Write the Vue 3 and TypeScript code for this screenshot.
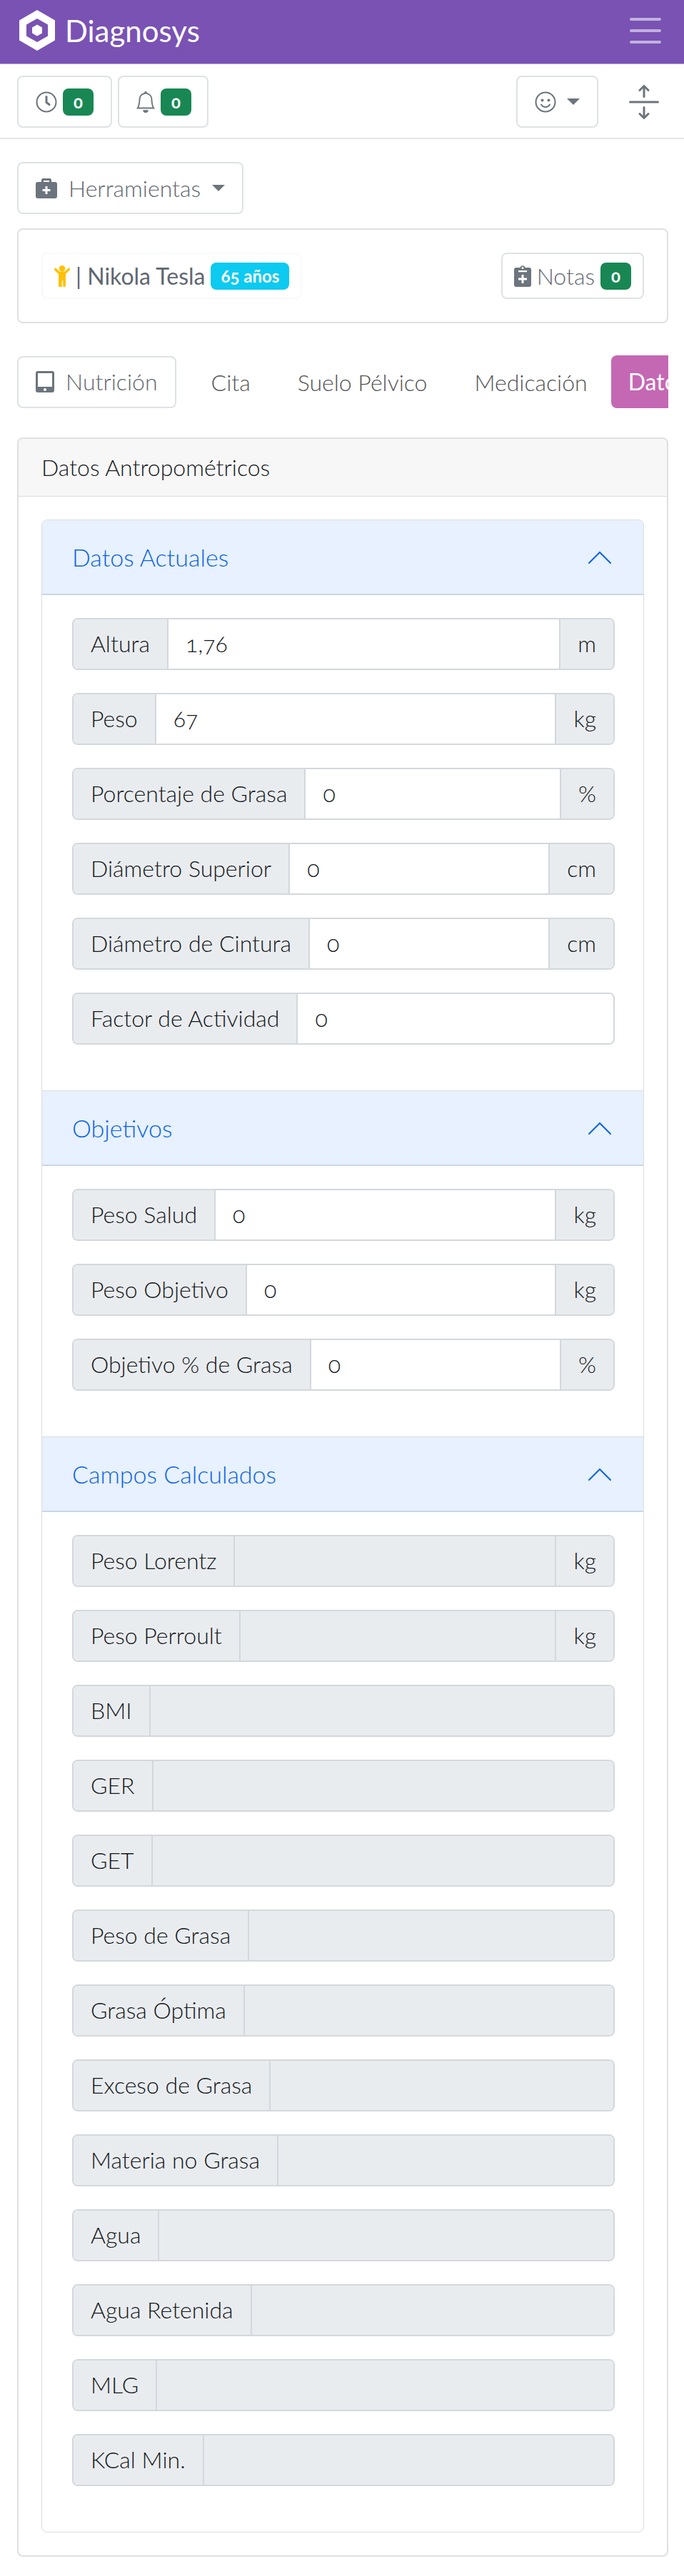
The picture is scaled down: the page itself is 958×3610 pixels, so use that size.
<script setup lang="ts">
import { reactive, ref } from 'vue'

interface Field {
  id: string
  label: string
  value: string
  unit?: string
  readonly?: boolean
}

interface Section {
  id: string
  title: string
  open: boolean
  fields: Field[]
}

const calculated = (id: string, label: string, unit?: string): Field => ({
  id,
  label,
  value: '',
  unit,
  readonly: true,
})

const sections = reactive<Section[]>([
  {
    id: 'actuales',
    title: 'Datos Actuales',
    open: true,
    fields: [
      { id: 'altura', label: 'Altura', value: '1,76', unit: 'm' },
      { id: 'peso', label: 'Peso', value: '67', unit: 'kg' },
      { id: 'grasa', label: 'Porcentaje de Grasa', value: '0', unit: '%' },
      { id: 'superior', label: 'Diámetro Superior', value: '0', unit: 'cm' },
      { id: 'cintura', label: 'Diámetro de Cintura', value: '0', unit: 'cm' },
      { id: 'actividad', label: 'Factor de Actividad', value: '0' },
    ],
  },
  {
    id: 'objetivos',
    title: 'Objetivos',
    open: true,
    fields: [
      { id: 'salud', label: 'Peso Salud', value: '0', unit: 'kg' },
      { id: 'objetivo', label: 'Peso Objetivo', value: '0', unit: 'kg' },
      { id: 'objetivo-grasa', label: 'Objetivo % de Grasa', value: '0', unit: '%' },
    ],
  },
  {
    id: 'calculados',
    title: 'Campos Calculados',
    open: true,
    fields: [
      calculated('lorentz', 'Peso Lorentz', 'kg'),
      calculated('perroult', 'Peso Perroult', 'kg'),
      calculated('bmi', 'BMI'),
      calculated('ger', 'GER'),
      calculated('get', 'GET'),
      calculated('peso-grasa', 'Peso de Grasa'),
      calculated('optima', 'Grasa Óptima'),
      calculated('exceso', 'Exceso de Grasa'),
      calculated('materia', 'Materia no Grasa'),
      calculated('agua', 'Agua'),
      calculated('retenida', 'Agua Retenida'),
      calculated('mlg', 'MLG'),
      calculated('kcal', 'KCal Min.'),
    ],
  },
])

const tabs = ['Cita', 'Suelo Pélvico', 'Medicación', 'Datos Antropométricos']
const activeTab = ref('Datos Antropométricos')
</script>

<template>
  <div class="page">
    <header class="topbar">
      <a class="brand" href="#">
        <svg class="brand-mark" viewBox="0 0 50 57" aria-hidden="true">
          <path
            fill-rule="evenodd"
            d="M25 0 50 14.5V42.5L25 57 0 42.5V14.5ZM25 12 10 20.5V36.5L25 45 40 36.5V20.5Z"
          />
          <path d="M25 20.5 32 24.5V32.5L25 36.5 18 32.5V24.5Z" />
        </svg>
        <span>Diagnosys</span>
      </a>
      <button class="menu" type="button" aria-label="Menú">
        <svg viewBox="0 0 44 38" aria-hidden="true">
          <path d="M2 3h40M2 19h40M2 35h40" />
        </svg>
      </button>
    </header>

    <div class="toolbar">
      <button class="btn" type="button" aria-label="Pendientes">
        <svg class="icon line" viewBox="0 0 30 30" aria-hidden="true">
          <circle cx="15" cy="15" r="13.5" />
          <path class="hand" d="M15 7.5V15.5L19 18.5" />
        </svg>
        <span class="badge green">0</span>
      </button>
      <button class="btn bell" type="button" aria-label="Avisos">
        <svg class="icon" viewBox="0 0 16 16" aria-hidden="true">
          <path
            d="M8 16a2 2 0 0 0 2-2H6a2 2 0 0 0 2 2zM8 1.918l-.797.161A4.002 4.002 0 0 0 4 6c0 .628-.134 2.197-.459 3.742-.16.767-.376 1.566-.663 2.258h10.244c-.287-.692-.502-1.49-.663-2.258C12.134 8.197 12 6.628 12 6a4.002 4.002 0 0 0-3.203-3.92L8 1.917zM14.22 12c.223.447.481.801.78 1H1c.299-.199.557-.553.78-1C2.68 10.2 3 6.88 3 6c0-2.42 1.72-4.44 4.005-4.901a1 1 0 1 1 1.99 0A5.002 5.002 0 0 1 13 6c0 .88.32 4.2 1.22 6z"
          />
        </svg>
        <span class="badge green">0</span>
      </button>
      <button class="btn mood" type="button" aria-label="Estado">
        <svg class="icon line" viewBox="0 0 30 30" aria-hidden="true">
          <circle cx="15" cy="15" r="13.5" />
          <path d="M9 18.5Q11 22 15 22T21 18.5" />
          <circle class="dot" cx="10.5" cy="12.5" r="2" />
          <circle class="dot" cx="19.5" cy="12.5" r="2" />
        </svg>
        <span class="caret"></span>
      </button>
      <button class="expand" type="button" aria-label="Expandir">
        <svg viewBox="0 0 16 16" aria-hidden="true">
          <path
            d="M1 8a.5.5 0 0 1 .5-.5h13a.5.5 0 0 1 0 1h-13A.5.5 0 0 1 1 8zM7.646.146a.5.5 0 0 1 .708 0l2 2a.5.5 0 0 1-.708.708L8.5 1.707V5.5a.5.5 0 0 1-1 0V1.707L6.354 2.854a.5.5 0 1 1-.708-.708l2-2zM8 10a.5.5 0 0 1 .5.5v3.793l1.146-1.147a.5.5 0 0 1 .708.708l-2 2a.5.5 0 0 1-.708 0l-2-2a.5.5 0 0 1 .708-.708L7.5 14.293V10.5A.5.5 0 0 1 8 10z"
          />
        </svg>
      </button>
    </div>

    <main class="content">
      <button class="btn tools" type="button">
        <svg class="icon" viewBox="0 0 30 30" aria-hidden="true">
          <path
            fill-rule="evenodd"
            d="M8 6V3.500Q8 1 10.500 1H19.500Q22 1 22 3.500V6H27Q30 6 30 9V26Q30 29 27 29H3Q0 29 0 26V9Q0 6 3 6ZM11 6H19V4H11ZM13.500 12V16H9.500V19H13.500V23H16.500V19H20.500V16H16.500V12Z"
          />
        </svg>
        <span>Herramientas</span>
        <span class="caret"></span>
      </button>

      <section class="patient">
        <button class="btn small ghost" type="button">
          <svg class="icon person" viewBox="0 0 22 30" aria-hidden="true">
            <circle cx="11" cy="4.200" r="4.200" />
            <path
              d="M3 4.200 7.500 8.500H14.500L19 4.200A1.800 1.800 0 0 1 21.500 6.800L16 12V28.500A1.900 1.900 0 0 1 12.200 28.500V21H10.800V28.500A1.900 1.900 0 0 1 6 28.500V12L.5 6.800A1.800 1.800 0 0 1 3 4.200Z"
            />
          </svg>
          <strong>| Nikola Tesla</strong>
          <span class="badge cyan">65 años</span>
        </button>
        <button class="btn small" type="button">
          <svg class="icon clip" viewBox="0 0 24 30" aria-hidden="true">
            <path
              fill-rule="evenodd"
              d="M3 3H8.500A3.600 3.600 0 0 1 15.500 3H21Q24 3 24 6V27Q24 30 21 30H3Q0 30 0 27V6Q0 3 3 3ZM12 2A1.500 1.500 0 1 0 12 5A1.500 1.500 0 1 0 12 2ZM6 7V9.200H18V7ZM10.500 13V17.500H6V20.500H10.500V25H13.500V20.500H18V17.500H13.500V13Z"
            />
          </svg>
          <span>Notas</span>
          <span class="badge green">0</span>
        </button>
      </section>

      <nav class="tabs" aria-label="Secciones">
        <button class="btn kind" type="button">
          <svg class="icon tablet" viewBox="0 0 26 30" aria-hidden="true">
            <path
              fill-rule="evenodd"
              d="M3 0H23Q26 0 26 3V27Q26 30 23 30H3Q0 30 0 27V3Q0 0 3 0ZM3 3V22H23V3ZM13 24A2 2 0 1 0 13 28A2 2 0 1 0 13 24Z"
            />
          </svg>
          <span>Nutrición</span>
        </button>
        <a
          v-for="tab in tabs"
          :key="tab"
          href="#"
          class="tab"
          :class="{ active: tab === activeTab }"
          @click.prevent="activeTab = tab"
          >{{ tab }}</a
        >
      </nav>

      <section class="card">
        <h1 class="card-title">Datos Antropométricos</h1>
        <div class="card-body">
          <div class="accordion">
            <section v-for="section in sections" :key="section.id" class="section">
              <h2 class="section-head">
                <button
                  type="button"
                  class="section-toggle"
                  :aria-expanded="section.open"
                  @click="section.open = !section.open"
                >
                  <span>{{ section.title }}</span>
                  <svg
                    class="chevron"
                    :class="{ closed: !section.open }"
                    viewBox="0 0 34 34"
                    aria-hidden="true"
                  >
                    <path d="M2 25 17 10 32 25" />
                  </svg>
                </button>
              </h2>
              <div v-show="section.open" class="fields">
                <div v-for="field in section.fields" :key="field.id" class="field">
                  <label :for="field.id">{{ field.label }}</label>
                  <input
                    :id="field.id"
                    v-model="field.value"
                    type="text"
                    :readonly="field.readonly"
                  />
                  <span v-if="field.unit" class="unit">{{ field.unit }}</span>
                </div>
              </div>
            </section>
          </div>
        </div>
      </section>
    </main>
  </div>
</template>

<style>
body {
  margin: 0;
  background: #fff;
}
</style>

<style scoped>
.page,
.page * {
  box-sizing: border-box;
}

.page {
  font-family: Lato, "Open Sans", sans-serif;
  font-size: 32px;
  font-weight: 300;
  line-height: 48px;
  font-variant-numeric: oldstyle-nums;
  color: #14181b;
  padding-bottom: 26px;
}

button,
input {
  font: inherit;
  font-variant-numeric: inherit;
  color: inherit;
  margin: 0;
}

button {
  cursor: pointer;
}

.topbar {
  display: flex;
  align-items: center;
  justify-content: space-between;
  height: 90px;
  padding: 0 32px 4px 27px;
  background: #7952b3;
  border-bottom: 1px solid #b9a3d6;
}

.brand {
  display: flex;
  align-items: center;
  gap: 14px;
  color: #fff;
  font-size: 42px;
  font-weight: 400;
  line-height: 56px;
  text-decoration: none;
}

.brand-mark {
  width: 50px;
  height: 57px;
  fill: #fff;
}

.menu {
  display: flex;
  padding: 0;
  border: 0;
  background: none;
}

.menu svg {
  width: 44px;
  height: 38px;
  fill: none;
  stroke: rgba(255, 255, 255, 0.55);
  stroke-width: 4;
  stroke-linecap: round;
}

.toolbar {
  display: flex;
  align-items: center;
  gap: 8px;
  padding: 16px 32px 14px 24px;
  border-bottom: 2px solid #e6e6e6;
}

.btn {
  display: inline-flex;
  flex: none;
  align-items: center;
  gap: 8px;
  height: 73px;
  padding: 0 24px;
  border: 2px solid #dee2e6;
  border-radius: 8px;
  background: #fff;
  color: #5f6870;
  white-space: nowrap;
}

.bell {
  gap: 6px;
  padding: 0 22px;
}

.icon {
  width: 30px;
  height: 30px;
  flex: none;
  fill: #6c757d;
}

.line {
  fill: none;
  stroke: #6c757d;
  stroke-width: 2;
  stroke-linecap: round;
}

.hand {
  stroke-width: 3;
}

.dot {
  fill: #6c757d;
  stroke: none;
}

.badge {
  display: inline-flex;
  align-items: center;
  justify-content: center;
  height: 38px;
  min-width: 43px;
  padding: 0 14px;
  border-radius: 8px;
  color: #fff;
  font-size: 24px;
  font-weight: 700;
  line-height: 30px;
}

.green {
  background: #198754;
}

.cyan {
  background: #0dcaf0;
}

.caret {
  border: 9px solid transparent;
  border-top-color: #6c757d;
  border-bottom: 0;
}

.mood {
  gap: 15px;
  margin-left: auto;
  margin-right: 32px;
}

.expand {
  display: flex;
  padding: 0;
  border: 0;
  background: none;
}

.expand svg {
  width: 48px;
  height: 48px;
  fill: #6c757d;
}

.content {
  display: flex;
  flex-direction: column;
  align-items: stretch;
  padding: 32px 22px 0 24px;
}

.tools {
  align-self: flex-start;
  gap: 16px;
}

.patient {
  display: flex;
  align-items: center;
  justify-content: space-between;
  height: 133px;
  margin-top: 20px;
  padding: 0 32px;
  border: 2px solid #e0e0e0;
  border-radius: 8px;
}

.small {
  height: 65px;
  padding: 0 16px;
}

.ghost {
  border-color: #f8f9fa;
}

.person {
  width: 22px;
  fill: #ffc107;
}

.clip {
  width: 24px;
}

.tablet {
  width: 26px;
}

.tabs {
  display: flex;
  align-items: center;
  margin-top: 45px;
  overflow: hidden;
}

.kind {
  gap: 16px;
  margin-right: 16px;
}

.tab {
  flex: none;
  padding: 14px 33px 12px;
  color: #555;
  text-decoration: none;
  white-space: nowrap;
}

.tab.active {
  padding: 13px 24px;
  border-radius: 8px;
  background: #c468b3;
  color: #fff;
  font-weight: 400;
}

.card {
  margin-top: 41px;
  border: 2px solid #e0e0e0;
  border-radius: 8px;
}

.card-title {
  margin: 0;
  padding: 16px 32px;
  border-bottom: 1px solid #dadada;
  border-radius: 6px 6px 0 0;
  background: #f7f7f7;
  font-size: 32px;
  font-weight: 300;
}

.card-body {
  padding: 32px;
}

.accordion {
  border: 1px solid #dcdcdc;
  border-radius: 8px;
  overflow: hidden;
}

.section + .section {
  border-top: 1px solid #dcdcdc;
}

.section-head {
  margin: 0;
  font-size: 34px;
  font-weight: 300;
}

.section-toggle {
  display: flex;
  align-items: center;
  justify-content: space-between;
  width: 100%;
  height: 105px;
  padding: 0 44px 0 42px;
  border: 0;
  border-bottom: 2px solid #cad6e8;
  background: #e7f1ff;
  color: #0c63e4;
  text-align: left;
}

.chevron {
  width: 34px;
  height: 34px;
  fill: none;
  stroke: #0c63e4;
  stroke-width: 2;
  stroke-linecap: round;
}

.chevron.closed {
  transform: rotate(180deg);
}

.fields {
  display: flex;
  flex-direction: column;
  gap: 32px;
  padding: 32px 40px 64px 42px;
}

.field {
  display: flex;
  height: 73px;
  border: 2px solid #d3d8de;
  border-radius: 8px;
  overflow: hidden;
}

.field label,
.unit {
  display: flex;
  flex: none;
  align-items: center;
  padding: 0 24px 2px;
  background: #e9ecef;
}

.field input {
  flex: 1;
  min-width: 0;
  padding: 0 24px 2px;
  border: 0;
  border-left: 2px solid #d3d8de;
  border-radius: 0;
  outline: 0;
  background: #fff;
}

.field input:read-only {
  background: #e9ecef;
}

.unit {
  border-left: 2px solid #d3d8de;
}
</style>
